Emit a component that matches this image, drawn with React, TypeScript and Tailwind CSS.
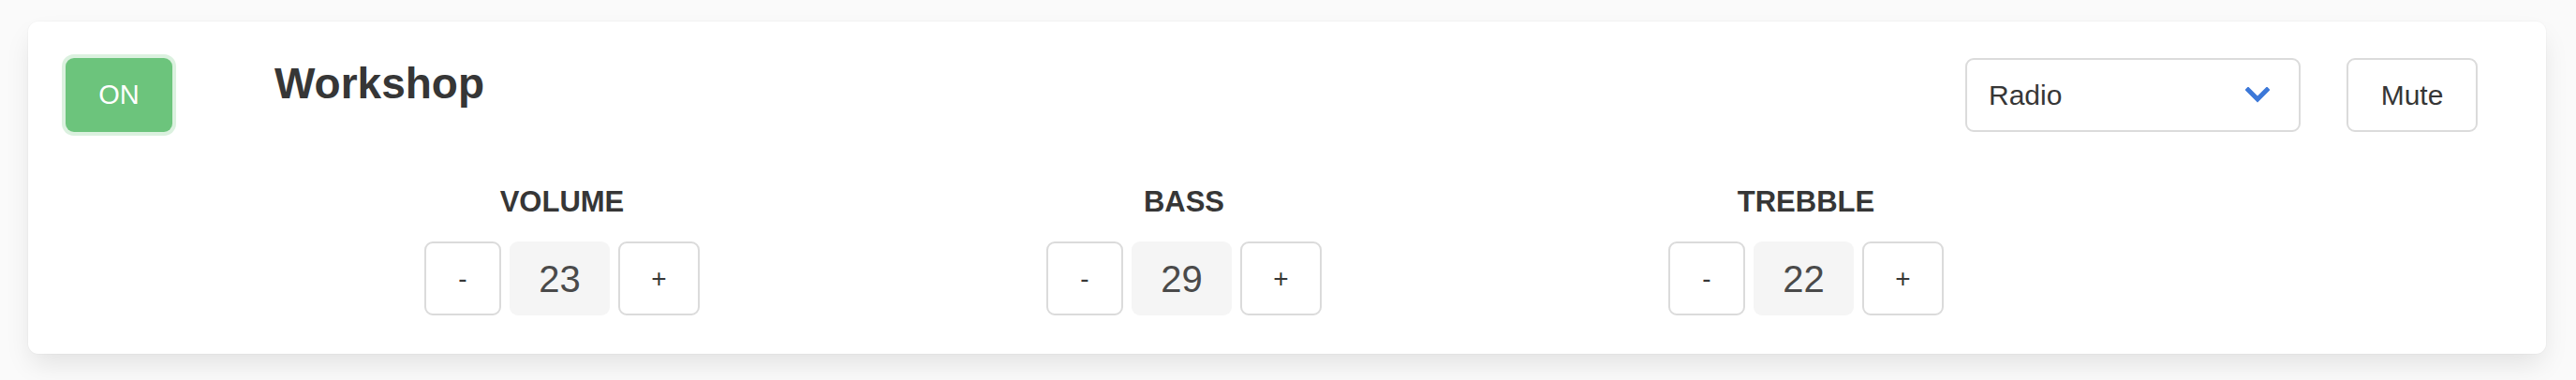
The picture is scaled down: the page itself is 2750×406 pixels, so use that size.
import { useState } from "react"

const font = { fontFamily: '"Liberation Sans", Arial, sans-serif' }

function Stepper({ label, initial }: { label: string; initial: number }) {
	const [value, setValue] = useState(initial)

	return (
		<div className="flex w-[664px] flex-col items-center">
			<p className="text-[31px] font-bold leading-none text-[#363636]">{label}</p>
			<div className="mt-[27px] flex gap-[9px]">
				<button
					type="button"
					onClick={() => setValue((v) => v - 1)}
					className="flex h-[79px] w-[82px] items-center justify-center rounded-[9px] border-2 border-[#dbdbdb] bg-white text-[28px] text-[#363636]"
				>
					-
				</button>
				<div className="flex h-[79px] w-[107px] items-center justify-center rounded-[9px] bg-[#f5f5f5] text-[40px] text-[#4a4a4a]">
					{value}
				</div>
				<button
					type="button"
					onClick={() => setValue((v) => v + 1)}
					className="flex h-[79px] w-[87px] items-center justify-center rounded-[9px] border-2 border-[#dbdbdb] bg-white text-[28px] text-[#363636]"
				>
					+
				</button>
			</div>
		</div>
	)
}

export default function App() {
	const [on, setOn] = useState(true)
	const [muted, setMuted] = useState(false)

	return (
		<div className="min-h-screen bg-[#fafafa] pl-[30px] pr-[32px] pt-[23px]" style={font}>
			<div className="rounded-[11px] bg-white pb-[41px] pl-10 pr-10 pt-[39px] shadow-[0_14px_29px_-4px_rgba(10,10,10,0.1),0_0_0_1px_rgba(10,10,10,0.02)]">
				<div className="flex h-[79px] items-start">
					<button
						type="button"
						onClick={() => setOn(!on)}
						className="h-[79px] w-[114px] rounded-[9px] bg-[#6cc47c] text-[29px] text-white ring-4 ring-[#dbf1df]"
					>
						{on ? "ON" : "OFF"}
					</button>
					<h1 className="ml-[109px] mt-[4px] text-[46px] font-bold leading-none text-[#363636]">
						Workshop
					</h1>
					<div className="ml-auto mr-[33px] flex gap-[49px]">
						<div className="flex h-[79px] w-[358px] items-center justify-between rounded-[9px] border-2 border-[#dbdbdb] bg-white pl-[23px] pr-[31px] text-[30px] text-[#363636]">
							<span>Radio</span>
							<svg width="26" height="18" viewBox="0 0 26 18" fill="none">
								<polyline
									points="3,3 13,13 23,3"
									stroke="#3c78d8"
									strokeWidth="5"
									strokeLinecap="square"
								/>
							</svg>
						</div>
						<button
							type="button"
							onClick={() => setMuted(!muted)}
							className="h-[79px] w-[140px] rounded-[9px] border-2 border-[#dbdbdb] bg-white text-[30px] text-[#363636]"
						>
							{muted ? "Unmute" : "Mute"}
						</button>
					</div>
				</div>

				<div className="mt-[59px] flex pl-[198px]">
					<Stepper label="VOLUME" initial={23} />
					<Stepper label="BASS" initial={29} />
					<Stepper label="TREBBLE" initial={22} />
				</div>
			</div>
		</div>
	)
}
